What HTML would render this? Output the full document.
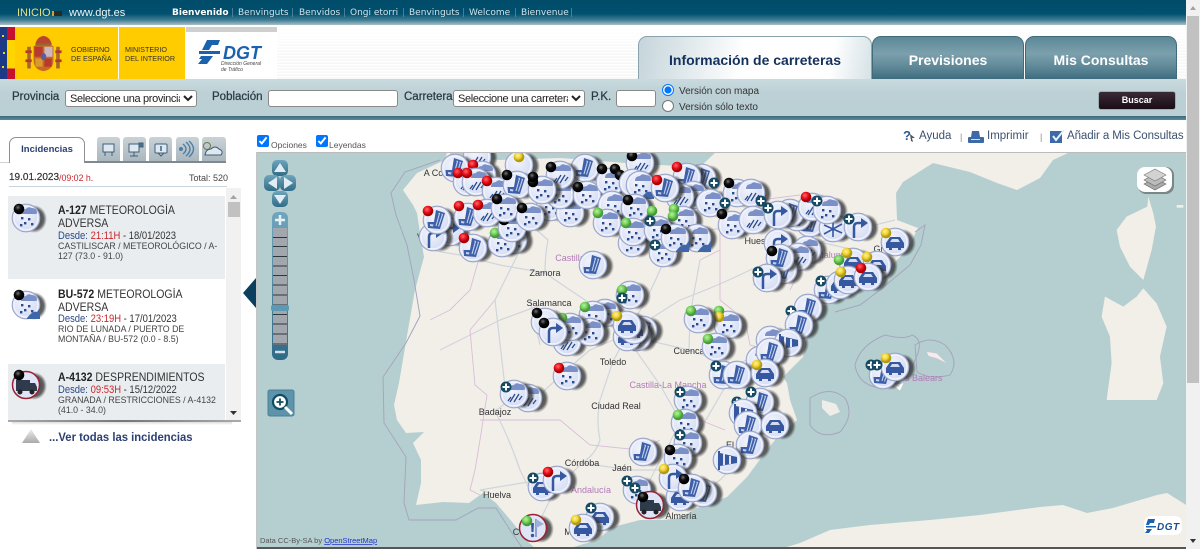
<!DOCTYPE html>
<html lang="es"><head><meta charset="utf-8"><title>DGT</title>
<style>
html,body{margin:0;padding:0;width:1200px;height:549px;overflow:hidden;background:#fff;font-family:"Liberation Sans",Arial,sans-serif}
.t{position:absolute;white-space:nowrap;line-height:14px}
.a{position:absolute}
select,input[type=text]{position:absolute;box-sizing:border-box;margin:0;font:12px "Liberation Sans",Arial,sans-serif;background:#fff;border:1px solid #8a8a8a;border-radius:3px;color:#222}
select{font-size:11px;letter-spacing:-.35px;padding:0}
input[type=text]{padding:0 2px}
input[type=radio],input[type=checkbox]{position:absolute;margin:0}
.lab{font-size:11.5px;color:#2b3a45;font-weight:normal;-webkit-text-stroke:.25px #2b3a45}
.tab{position:absolute;top:36px;height:43px;box-sizing:border-box;border-radius:9px 9px 0 0;background:linear-gradient(#5d8898,#7ba0ac 40%,#5b8595 75%,#3e6c7e);border:1px solid #3f6b7b;border-bottom:0;color:#fff;font:bold 14px/46px "Liberation Sans",sans-serif;text-align:center}
.it{position:absolute;left:97px;top:137px;width:23px;height:24px;background:linear-gradient(#c9d2d7,#aab7be);border-radius:3px 3px 0 0}
.ti{font-size:11.5px;color:#333;transform:scaleX(.915);transform-origin:0 0}.ti b{color:#222}
.de{font-size:10.8px;color:#333;transform:scaleX(.875);transform-origin:0 0}.de span{color:#2c4a86}.de i{font-style:normal;color:#c8262c}
.sm{font-size:8.8px;color:#444}
.lang{top:6px;font:bold 9px/14px "DejaVu Sans",sans-serif;color:#d2e2e8}
.lang2{position:absolute;top:6px;color:#5f8da0;font:9px/14px "DejaVu Sans",sans-serif}
</style></head><body>

<!-- top bar -->
<div class="a" style="left:0;top:0;width:1186px;height:25px;background:linear-gradient(#004c69 0,#01506f 55%,#3f7d93 80%,#a9c0c8 100%)"></div>
<div class="t" style="left:17px;top:6px;font-size:11px;color:#ecdf8c">INICIO</div>
<div class="a" style="left:52px;top:11px;width:8px;height:5px;background:#2a2a22;border-left:2px solid #c9a52e"></div>
<div class="t" style="left:69px;top:6px;font-size:11px;color:#f0f5f6">www.dgt.es</div>
<div class="t lang" style="left:172px;color:#fff">Bienvenido</div>
<div class="t lang" style="left:238px;font-weight:normal">Benvinguts</div>
<div class="t lang" style="left:299px;font-weight:normal">Benvidos</div>
<div class="t lang" style="left:350px;font-weight:normal">Ongi etorri</div>
<div class="t lang" style="left:409px;font-weight:normal">Benvinguts</div>
<div class="t lang" style="left:469px;font-weight:normal">Welcome</div>
<div class="t lang" style="left:521px;font-weight:normal">Bienvenue</div>
<div class="lang2" style="left:231px">|</div><div class="lang2" style="left:291px">|</div><div class="lang2" style="left:343px">|</div><div class="lang2" style="left:402px">|</div><div class="lang2" style="left:462px">|</div><div class="lang2" style="left:514px">|</div><div class="lang2" style="left:570px">|</div>

<!-- header band -->
<div class="a" style="left:277px;top:25px;width:909px;height:54px;background:repeating-linear-gradient(#fff 0,#fff 1px,#f4f4f4 2px,#fafafa 3px)"></div>
<div class="a" style="left:277px;top:25px;width:909px;height:30px;background:linear-gradient(#fff,rgba(255,255,255,.6),rgba(255,255,255,0))"></div>

<!-- logos -->
<div class="a" style="left:0;top:25px;width:277px;height:54px;background:#fff;overflow:hidden">
 <div class="a" style="left:0;top:2px;width:7px;height:52px;background:#1d3a86"></div>
 <div class="a" style="left:2px;top:10px;width:2px;height:2px;background:#f5d40f"></div>
 <div class="a" style="left:3px;top:27px;width:2px;height:2px;background:#f5d40f"></div>
 <div class="a" style="left:2px;top:41px;width:2px;height:2px;background:#f5d40f"></div>
 <div class="a" style="left:7px;top:2px;width:8px;height:52px;background:linear-gradient(#c8102e 25%,#ffd500 25%,#ffd500 80%,#c8102e 80%)"></div>
 <div class="a" style="left:15px;top:2px;width:103px;height:52px;background:#fc0"></div>
 <div class="a" style="left:119px;top:2px;width:66px;height:52px;background:#fc0"></div>
 <div class="a" style="left:186px;top:2px;width:91px;height:5px;background:#cfcfcf"></div>
 <svg class="a" style="left:25px;top:10px" width="37" height="38" viewBox="0 0 40 42">
  <rect x="2" y="13" width="4" height="24" fill="#a8682a"/><rect x="34" y="13" width="4" height="24" fill="#a8682a"/>
  <rect x="0" y="17" width="7" height="3" fill="#b43a2c"/><rect x="33" y="17" width="7" height="3" fill="#b43a2c"/>
  <rect x="0" y="27" width="7" height="3" fill="#b43a2c"/><rect x="33" y="27" width="7" height="3" fill="#b43a2c"/>
  <path d="M11 10Q13 2 20 1Q27 2 29 10Z" fill="#b8452f"/><rect x="11" y="9" width="18" height="3" fill="#8c6a2a"/>
  <path d="M9 12H31V28Q31 38 20 40Q9 38 9 28Z" fill="#c86a24"/>
  <rect x="10" y="13" width="9" height="11" fill="#b8392e"/><rect x="21" y="13" width="9" height="11" fill="#c9b8c0"/>
  <rect x="11" y="26" width="8" height="9" fill="#d89a2c"/><rect x="21" y="26" width="8" height="9" fill="#b8392e"/>
  <ellipse cx="20" cy="24" rx="3" ry="4" fill="#5a5fa0"/>
 </svg>
 <div class="t" style="left:71px;top:21px;font-size:7.2px;line-height:8.5px;color:#333">GOBIERNO<br>DE ESPAÑA</div>
 <div class="t" style="left:125px;top:21px;font-size:7.2px;line-height:8.5px;color:#333">MINISTERIO<br>DEL INTERIOR</div>
 <svg class="a" style="left:198px;top:13px" width="26" height="28" viewBox="0 0 26 28"><g fill="#1a62ad"><path d="M9 2H22L20 7H14L11 12H4Z"/><rect x="1" y="13" width="21" height="3"/><path d="M3 18H15L9 26H0L4 21H1Z"/></g></svg>
 <div class="t" style="left:223px;top:19px;font:italic bold 18px/18px 'Liberation Sans',sans-serif;color:#1a62ad">DGT</div>
 <div class="t" style="left:221px;top:37px;font:italic 5px/5.5px 'Liberation Sans',sans-serif;color:#444">Dirección General<br>de Tráfico</div>
</div>

<!-- tabs -->
<div class="tab" style="left:638px;width:234px;background:linear-gradient(100deg,#c5d5db,#e9eff1 28%,#fff 45%,#fff 82%,#d6e2e6 100%);border:1px solid #8aa3ad;border-bottom:0;color:#14305c">Información de carreteras</div>
<div class="tab" style="left:872px;width:152px">Previsiones</div>
<div class="tab" style="left:1025px;width:152px">Mis Consultas</div>

<!-- search bar -->
<div class="a" style="left:0;top:79px;width:1186px;height:37px;background:linear-gradient(#c9dbdf,#bcd0d5 40%,#bad0d5)"></div>
<div class="a" style="left:0;top:116px;width:1186px;height:4px;background:linear-gradient(#3b6b7e,#5b8a9a)"></div>
<div class="t lab" style="left:12px;top:90px">Provincia</div>
<select style="left:65px;top:90px;width:132px;height:17px"><option>Seleccione una provincia</option></select>
<div class="t lab" style="left:212px;top:90px">Población</div>
<input type="text" style="left:268px;top:90px;width:130px;height:17px">
<div class="t lab" style="left:404px;top:90px">Carretera</div>
<select style="left:453px;top:90px;width:132px;height:17px"><option>Seleccione una carretera</option></select>
<div class="t lab" style="left:591px;top:90px">P.K.</div>
<input type="text" style="left:616px;top:90px;width:40px;height:17px">
<input type="radio" name="v" checked style="left:662px;top:84px;width:12px;height:12px">
<input type="radio" name="v" style="left:662px;top:100px;width:12px;height:12px">
<div class="t" style="left:679px;top:85px;font-size:10px;color:#333">Versión con mapa</div>
<div class="t" style="left:679px;top:101px;font-size:10px;color:#333">Versión sólo texto</div>
<div class="a" style="left:1099px;top:92px;width:76px;height:17px;border-radius:2px;background:linear-gradient(#3a2a36,#1a0d16);box-shadow:0 0 1px #000;color:#fff;font:bold 9px/17px 'Liberation Sans',sans-serif;text-align:center">Buscar</div>

<!-- sub bar -->
<input type="checkbox" checked style="left:257px;top:135px;width:12px;height:12px">
<div class="t" style="left:271px;top:138px;font-size:8.5px;color:#555">Opciones</div>
<input type="checkbox" checked style="left:316px;top:135px;width:12px;height:12px">
<div class="t" style="left:329px;top:138px;font-size:8.5px;color:#555">Leyendas</div>
<div class="t" style="left:903px;top:129px;font:bold 13px/14px 'Liberation Sans',sans-serif;color:#2c5a90">?</div>
<svg class="a" style="left:910px;top:134px" width="6" height="8"><path d="M0 0L5 4L2 4L3 8L1 7Z" fill="#555"/></svg>
<div class="t" style="left:919px;top:129px;font-size:11.5px;color:#3d5170">Ayuda</div>
<div class="t" style="left:960px;top:130px;font-size:9px;color:#888">|</div>
<svg class="a" style="left:968px;top:130px" width="16" height="14"><path d="M4 1H11L12 7H3Z" fill="#3c6aa8"/><rect x="0" y="7" width="16" height="6" rx="1" fill="#3c6aa8"/><rect x="3" y="9" width="9" height="1" fill="#cfe0ef"/></svg>
<div class="t" style="left:987px;top:129px;font-size:11.5px;color:#3d5170">Imprimir</div>
<div class="t" style="left:1040px;top:130px;font-size:9px;color:#888">|</div>
<svg class="a" style="left:1050px;top:129px" width="15" height="15"><rect x="0" y="2" width="12" height="12" fill="#3c6aa8"/><path d="M3 7L6 11L14 1" fill="none" stroke="#e8f0f8" stroke-width="2"/></svg>
<div class="t" style="left:1067px;top:129px;font-size:11.5px;letter-spacing:-.08px;color:#3d5170">Añadir a Mis Consultas</div>

<!-- left panel tabs -->
<div class="a" style="left:9px;top:137px;width:76px;height:26px;box-sizing:border-box;border:1px solid #8d9094;border-bottom:0;border-radius:7px 7px 0 0;background:#fff;color:#2c3f70;font:bold 9.5px/24px 'Liberation Sans',sans-serif;text-align:center">Incidencias</div>
<div class="a" style="left:85px;top:161px;width:141px;height:2px;background:#7f8a90"></div>
<div class="a" style="left:0;top:162px;width:9px;height:1px;background:#cfd2d4"></div>
<div class="it"></div><div class="it" style="left:123px"></div><div class="it" style="left:149px"></div><div class="it" style="left:176px"></div><div class="it" style="left:202px;width:24px"></div>
<svg class="a" style="left:97px;top:137px" width="130" height="24" fill="none" stroke="#3f5f7a" stroke-width="1">
 <rect x="6" y="7" width="11" height="8" fill="#dfe8ee"/><path d="M8 15V19M15 15V19"/>
 <rect x="32" y="7" width="10" height="8" fill="#dfe8ee"/><path d="M37 15V19M33 19H41"/><rect x="42" y="6" width="4" height="4" fill="#4d7086"/>
 <rect x="58" y="7" width="12" height="9" rx="1" fill="#dfe8ee"/><path d="M64 9V14" stroke-width="1.5"/><path d="M61 16L64 19L67 16"/>
 <path d="M86 7Q92 12 86 17M89 5Q97 12 89 19M92 4Q101 12 92 20" stroke="#4a7ea8" stroke-width="1.4"/><circle cx="84" cy="12" r="2" fill="#4a7ea8" stroke="none"/>
 <circle cx="110" cy="9" r="3.5" stroke="#6a7d4a"/><path d="M108 18H124Q127 14 122 12Q118 8 114 12Q109 12 108 18Z" fill="#dfe8ee"/>
</svg>
<div class="t" style="left:9px;top:171px;font-size:10px;color:#333;-webkit-text-stroke:.2px #333">19.01.2023</div>
<div class="t" style="left:59px;top:171px;font-size:8.8px;color:#c8262c">/09:02 h.</div>
<div class="t" style="left:189px;top:171px;font-size:9px;color:#444">Total: 520</div>
<div class="a" style="left:9px;top:186px;width:218px;height:1px;background:#c7d3dd"></div>

<!-- list -->
<div class="a" style="left:8px;top:196px;width:217px;height:83px;background:#e9edf0"></div>
<div class="a" style="left:8px;top:364px;width:217px;height:56px;background:#e9edf0"></div>
<div class="a" style="left:226px;top:188px;width:15px;height:233px;background:#f1f1f1"></div>
<div class="a" style="left:228px;top:202px;width:12px;height:15px;background:#c1c1c1"></div>
<svg class="a" style="left:226px;top:188px" width="15" height="233"><path d="M7.5 7L11 11H4Z" fill="#a3a3a3"/><path d="M4 223H11L7.500 227Z" fill="#333"/></svg>
<div class="a" style="left:8px;top:420px;width:233px;height:2px;background:linear-gradient(90deg,#aaa,#777 50%,#aaa)"></div>
<div class="a" style="left:12px;top:422px;width:220px;height:3px;background:linear-gradient(#ddd,#fff)"></div>

<div class="t ti" style="left:58px;top:204px"><b>A-127</b> METEOROLOGÍA</div>
<div class="t ti" style="left:58px;top:217px">ADVERSA</div>
<div class="t de" style="left:58px;top:229px"><span>Desde:</span> <i>21:11H</i> - 18/01/2023</div>
<div class="t sm" style="left:58px;top:239px">CASTILISCAR / METEOROLÓGICO / A-</div>
<div class="t sm" style="left:58px;top:249px">127 (73.0 - 91.0)</div>

<div class="t ti" style="left:58px;top:288px"><b>BU-572</b> METEOROLOGÍA</div>
<div class="t ti" style="left:58px;top:301px">ADVERSA</div>
<div class="t de" style="left:58px;top:312px"><span>Desde:</span> <i>23:19H</i> - 17/01/2023</div>
<div class="t sm" style="left:58px;top:322px">RIO DE LUNADA / PUERTO DE</div>
<div class="t sm" style="left:58px;top:332px">MONTAÑA / BU-572 (0.0 - 8.5)</div>

<div class="t ti" style="left:58px;top:371px"><b>A-4132</b> DESPRENDIMIENTOS</div>
<div class="t de" style="left:58px;top:383px"><span>Desde:</span> <i>09:53H</i> - 15/12/2022</div>
<div class="t sm" style="left:58px;top:393px">GRANADA / RESTRICCIONES / A-4132</div>
<div class="t sm" style="left:58px;top:403px">(41.0 - 34.0)</div>

<svg class="a" style="left:22px;top:429px" width="18" height="15"><defs><linearGradient id="tg" x1="0" y1="0" x2="0" y2="1"><stop offset="0" stop-color="#eee"/><stop offset="1" stop-color="#aaa"/></linearGradient></defs><path d="M9 0L18 14H0Z" fill="url(#tg)"/></svg>
<div class="t" style="left:49px;top:430px;font-size:12px;font-weight:bold;color:#2c3f70;transform:scaleX(.94);transform-origin:0 0">...Ver todas las incidencias</div>
<svg class="a" style="left:243px;top:278px" width="14" height="30"><path d="M0 15L13 0V30Z" fill="#0c3f5e"/></svg>

<!-- scrollbar -->
<div class="a" style="left:1186px;top:0;width:14px;height:549px;background:#f1f1f1"></div>
<div class="a" style="left:1187px;top:16px;width:12px;height:367px;background:#c1c1c1"></div>
<svg class="a" style="left:1186px;top:0" width="14" height="549"><path d="M7 6L10 10H4Z" fill="#a3a3a3"/><path d="M4 539H10L7 543Z" fill="#333"/></svg>

<!-- map -->
<svg class="a" style="left:257px;top:152px;background:#b5cfd1" width="929" height="397" viewBox="257 152 929 397">
<defs>
<filter id="bl" x="-2%" y="-2%" width="104%" height="104%"><feGaussianBlur stdDeviation=".35"/></filter>
<radialGradient id="mg" cx=".4" cy=".35" r=".8"><stop offset="0" stop-color="#f2f4fc"/><stop offset="1" stop-color="#d2daf2"/></radialGradient>
<radialGradient id="sh"><stop offset="0" stop-color="#222" stop-opacity=".9"/><stop offset=".75" stop-color="#333" stop-opacity=".75"/><stop offset="1" stop-color="#444" stop-opacity="0"/></radialGradient>
<radialGradient id="rd" cx=".4" cy=".35"><stop offset="0" stop-color="#ff6a6a"/><stop offset=".6" stop-color="#e8101e"/><stop offset="1" stop-color="#a00"/></radialGradient>
<radialGradient id="bk" cx=".4" cy=".35"><stop offset="0" stop-color="#777"/><stop offset=".5" stop-color="#111"/><stop offset="1" stop-color="#000"/></radialGradient>
<radialGradient id="gn" cx=".4" cy=".35"><stop offset="0" stop-color="#bdf0a0"/><stop offset=".6" stop-color="#6fcf55"/><stop offset="1" stop-color="#4a9a3c"/></radialGradient>
<radialGradient id="yl" cx=".4" cy=".35"><stop offset="0" stop-color="#fff39a"/><stop offset=".6" stop-color="#f0d030"/><stop offset="1" stop-color="#b09a10"/></radialGradient>
<g id="b"><ellipse cx="8" cy="1" rx="13" ry="14" fill="url(#sh)"/><circle r="13.800" fill="#e2e7f8" stroke="#9aa5c6" stroke-width="1.100"/><circle r="11.800" fill="url(#mg)" stroke="#f6f8ff" stroke-width=".8"/></g>
<g id="R"><circle r="5.300" fill="url(#rd)"/></g>
<g id="K"><circle r="5.300" fill="url(#bk)"/></g>
<g id="G"><circle r="5.300" fill="url(#gn)"/></g>
<g id="Y"><circle r="5.300" fill="url(#yl)"/></g>
<g id="P"><circle r="5.500" fill="#174a63"/><path d="M-3.500 0H3.500M0-3.500V3.500" stroke="#fff" stroke-width="2"/></g>
<path id="cl" d="M-5-4Q-5-9 0-9Q2-12 6-10Q11-10 11-5Q11-4 10-4Z" fill="#7b90c8"/>
<g id="w"><use href="#b"/><use href="#cl"/><g fill="#2b4c91"><rect x="-5" y="-1" width="2.400" height="2.400"/><rect x="2" y="0" width="2.400" height="2.400"/><rect x="-2" y="4" width="2.400" height="2.400"/><rect x="5" y="5" width="2.400" height="2.400"/><rect x="-6" y="6" width="2.400" height="2.400"/></g></g>
<g id="r"><use href="#b"/><use href="#cl"/><path d="M-3 3L-6 7M1 0L-4 8M5 0L0 8M8 2L5 6" stroke="#2b4c91" stroke-width="1.300" fill="none"/></g>
<g id="n"><use href="#w"/><path d="M1 13Q7 5 11 7L14 3V14H1Z" fill="#3f66a8"/></g>
<g id="c"><use href="#b"/><path d="M-1-10L8-7L3 9L-9 8L-9.500 2L-3 2Z" fill="#3c5fa8"/><path d="M1.500-7L2.500-6.600L-1 6M4.500-6L5.500-5.600L1.500 6.500" stroke="#c4d0ee" stroke-width="1.100" fill="none"/><path d="M-7 4L-3.500 4.500L-4 6.500L-7 6Z" fill="#c4d0ee"/></g>
<g id="a"><use href="#b"/><path d="M-4 11V0Q-4-4 0-4H5" fill="none" stroke="#3458a0" stroke-width="2.500"/><path d="M3-9L10-4L3 1Z" fill="#3458a0"/></g>
<g id="k"><use href="#b"/><path d="M-9 6V1L-5-5H5L9 1V6H6V8H3V6H-3V8H-6V6Z" fill="#3458a0"/><path d="M-5 0L-3-3H3L5 0Z" fill="#d2dbf3"/></g>
<g id="s"><use href="#b"/><path d="M-8-9V10" stroke="#3458a0" stroke-width="2"/><path d="M-7-7L10-3V3L-7 6Z" fill="#3458a0"/><path d="M-3-6V5M3-4V4" stroke="#dfe5f7" stroke-width="2"/></g>
<g id="z"><use href="#b"/><path d="M-9-3L9 5M9-4L-9 6M0-7V9" stroke="#3458a0" stroke-width="1.600"/></g>
<g id="t"><ellipse cx="8" cy="1" rx="13" ry="14" fill="url(#sh)"/><circle r="13.500" fill="#dfe5f7" stroke="#9a2030" stroke-width="1.500"/><path d="M-10-5H4V6H-10ZM4-2H9L11 2V6H4Z" fill="#2f3a4c"/><circle cx="-6" cy="7" r="2.500" fill="#222"/><circle cx="6" cy="7" r="2.500" fill="#222"/></g>
<g id="x"><ellipse cx="8" cy="1" rx="13" ry="14" fill="url(#sh)"/><circle r="13.500" fill="#dfe5f7" stroke="#9a2030" stroke-width="1.500"/><path d="M3-9V9" stroke="#8ea0cc" stroke-width="2"/><path d="M3-9L11-4L3 0Z" fill="#9fb0d8"/><path d="M-2-5H1L.5 4H-1.500Z" fill="#3458a0"/><circle cx="-.5" cy="7.500" r="1.700" fill="#3458a0"/></g>
</defs>

<!-- land -->
<g filter="url(#bl)">
<path d="M447 152L445 160L417 173L403 190L413 205L417 213L420 233L424 257L415 290L408 330L399 383L394 405L397 420L406 433L424 432L413 443L421 460L421 483L416 505L443 502L469 503L483 493L496 503L513 523L526 540L536 549L567 549L597 540L613 527L640 520L663 520L680 518L697 508L727 497L747 477L767 450L775 440L797 420L790 400L787 383L783 377L803 357L807 337L820 307L857 293L890 267L907 250L918 228L897 220L896 193L903 182L933 163L970 172L997 183L1017 190L1040 178L1053 160L1070 152Z" fill="#f2efe9"/>
<path d="M450 152H716L700 167L640 164L560 158L500 160L450 156Z" fill="#b5cfd1"/>
<path d="M780 549L800 543L830 530L870 525L930 520L980 515L1040 507L1063 505L1087 513L1113 508L1157 495L1167 493L1183 503L1186 505V549Z" fill="#f2efe9"/>
<g transform="translate(740 150) scale(.3333)" fill="#f2efe9">
<path d="M1225 140L1240 190L1248 230L1235 300L1210 390L1170 350L1140 290L1130 240L1160 200L1222 170Z"/>
<path d="M1210 415L1250 460L1280 530L1260 620L1270 700L1250 750L1100 750L1115 640L1110 560L1085 500L1095 440L1150 470L1190 440Z"/>
<path d="M560 605L590 610L620 640L590 625L565 618Z" fill="#f6ecec" stroke="#d9b8cf"/>
<path d="M460 705L490 700L480 722Z" fill="#fff"/>
<path d="M1310 165h20v8h-20z"/>
</g>
<path d="M822 400L836 404L840 412L830 416L822 408Z" fill="#f2efe9" opacity=".95"/>

<!-- sea boundaries -->
<g fill="none" stroke="#a5a6bb" stroke-width="1">
<path d="M440 160L405 172L391 193L396 215L407 245L414 280L420 316L406 343L383 377L384 423L406 457L404 503L409 520L456 520L478 508L496 508L510 530L523 549"/>
<path d="M915 232L925 225L921 245L910 265L880 290L860 305L835 312"/>
<path d="M885 335Q905 340 912 335Q925 340 915 360Q905 385 880 388Q858 385 855 365Q860 345 885 335Z"/>
<path d="M915 345Q930 335 945 345Q960 360 950 375Q930 380 917 372Z"/>
<path d="M810 398Q830 385 845 398Q855 415 840 432Q820 440 810 425Z"/>
</g>
<!-- roads -->
<g fill="none" stroke="#d0d5db" stroke-width="1.200">
<path d="M625 335Q620 350 613 361L600 400Q596 420 600 440Q595 455 582 463L555 490L540 520"/>
<path d="M625 335L590 350Q560 375 540 395L510 400L495 411Q510 440 520 470L530 490"/>
<path d="M625 335L600 310Q585 300 570 290L545 273Q545 255 548 240L520 215"/>
<path d="M625 335Q645 305 660 270L680 225L700 200"/>
<path d="M625 335L689 350Q715 360 735 365L770 350"/>
<path d="M625 335L680 300Q720 285 750 270L800 250L855 230L895 220"/>
<path d="M625 335L660 385L680 420Q670 445 655 470L640 500"/>
<path d="M549 302L500 320L460 340L440 350M545 273L500 265L460 255L430 250"/>
<path d="M689 350L690 315L700 260M735 370L700 430L670 470L630 470L582 463M760 440L720 480L680 510"/>
<path d="M520 215L520 250L495 300L505 387M540 345L530 300"/>
<path d="M540 480L480 490L497 495M710 230L770 220M810 240L855 250"/>
</g>
<g fill="none" stroke="#d8bfd8" stroke-width=".9">
<path d="M480 255L470 290L450 310L430 320M495 300L470 330L475 385L487 395L480 440L475 470L470 490L480 495"/>
<path d="M480 420L520 420L560 420L590 445L640 450L660 440M700 260L720 250L720 230L760 200L800 195M720 250L720 300L745 320L750 345L770 350"/>
<path d="M790 290L800 270L810 265M690 400L700 420L725 430"/>
</g>
</g>
<!-- labels -->
<g font-family="Liberation Sans,sans-serif" font-size="9" fill="#333" text-anchor="middle">
<text x="435" y="176">A Cor</text><text x="545" y="276">Zamora</text><text x="549" y="306">Salamanca</text><text x="613" y="365">Toledo</text><text x="689" y="354">Cuenca</text><text x="616" y="409">Ciudad Real</text><text x="495" y="415">Badajoz</text><text x="582" y="466">Córdoba</text><text x="622" y="471">Jaén</text><text x="497" y="498">Huelva</text><text x="681" y="519">Almería</text><text x="755" y="244">Hues</text><text x="878" y="252">Gi</text><text x="730" y="448">El</text><text x="545" y="490">S</text><text x="568" y="535">M</text><text x="516" y="535">C</text><text x="420" y="240">V</text>
<g fill="#b27ab8"><text x="668" y="388">Castilla-La Mancha</text><text x="591" y="493">Andalucía</text><text x="570" y="261">Castilla</text><text x="768" y="285">Aragón</text><text x="830" y="258">Catalunya</text><text x="918" y="381">Illes Balears</text></g>
</g>

<!-- markers -->
<g filter="url(#bl)">
<use href="#r" x="477" y="157"/><use href="#c" x="455" y="168"/><use href="#b" x="519" y="165"/><use href="#Y" x="519" y="157"/>
<use href="#r" x="482" y="175"/><use href="#R" x="473" y="165"/><use href="#r" x="467" y="182"/><use href="#R" x="458" y="173"/><use href="#r" x="476" y="182"/><use href="#R" x="467" y="173"/>
<use href="#r" x="496" y="191"/><use href="#R" x="487" y="181"/>
<use href="#w" x="550" y="207"/><use href="#w" x="570" y="213"/><use href="#w" x="560" y="195"/>
<use href="#c" x="585" y="168"/><use href="#r" x="560" y="175"/><use href="#K" x="551" y="167"/><use href="#c" x="517" y="185"/><use href="#K" x="507" y="175"/>
<use href="#w" x="542" y="190"/><use href="#K" x="533" y="182"/><use href="#K" x="533" y="177"/><use href="#w" x="587" y="195"/><use href="#K" x="578" y="187"/>
<use href="#r" x="640" y="163"/><use href="#K" x="632" y="156"/><use href="#w" x="610" y="182"/><use href="#K" x="602" y="169"/><use href="#K" x="615" y="169"/><use href="#K" x="620" y="175"/><use href="#w" x="633" y="183"/><use href="#n" x="640" y="185"/>
<use href="#w" x="612" y="205"/><use href="#w" x="635" y="208"/><use href="#K" x="628" y="200"/>
<use href="#w" x="607" y="223"/><use href="#G" x="598" y="213"/><use href="#w" x="632" y="243"/><use href="#w" x="633" y="232"/><use href="#G" x="626" y="223"/>
<use href="#a" x="450" y="232"/><use href="#a" x="433" y="237"/><use href="#c" x="437" y="220"/><use href="#R" x="428" y="211"/>
<use href="#c" x="468" y="217"/><use href="#R" x="459" y="206"/><use href="#r" x="487" y="213"/><use href="#R" x="478" y="205"/>
<use href="#w" x="513" y="240"/><use href="#c" x="473" y="248"/><use href="#R" x="464" y="238"/><use href="#w" x="502" y="243"/><use href="#G" x="495" y="233"/>
<use href="#w" x="512" y="228"/><use href="#K" x="504" y="220"/><use href="#w" x="505" y="208"/><use href="#K" x="497" y="199"/><use href="#w" x="530" y="217"/><use href="#K" x="522" y="208"/>
<use href="#c" x="702" y="178"/><use href="#c" x="687" y="177"/><use href="#R" x="677" y="167"/><use href="#r" x="693" y="195"/><use href="#r" x="680" y="197"/><use href="#c" x="665" y="188"/><use href="#R" x="657" y="180"/>
<use href="#w" x="683" y="220"/><use href="#G" x="674" y="209"/><use href="#G" x="673" y="216"/><use href="#w" x="658" y="230"/><use href="#G" x="652" y="211"/><use href="#P" x="650" y="221"/>
<use href="#w" x="663" y="253"/><use href="#P" x="655" y="245"/><use href="#n" x="697" y="238"/><use href="#n" x="675" y="238"/><use href="#K" x="666" y="229"/>
<use href="#c" x="593" y="265"/>
<use href="#w" x="710" y="203"/><use href="#w" x="737" y="193"/><use href="#P" x="714" y="183"/><use href="#K" x="729" y="183"/><use href="#w" x="732" y="225"/><use href="#K" x="722" y="214"/><use href="#P" x="725" y="203"/>
<use href="#r" x="751" y="193"/><use href="#r" x="753" y="220"/><use href="#c" x="810" y="223"/><use href="#c" x="797" y="217"/><use href="#c" x="790" y="213"/><use href="#a" x="778" y="215"/><use href="#P" x="761" y="201"/><use href="#P" x="768" y="208"/>
<use href="#z" x="833" y="228"/><use href="#r" x="812" y="207"/><use href="#R" x="806" y="197"/><use href="#w" x="827" y="210"/><use href="#P" x="817" y="201"/><use href="#a" x="858" y="227"/><use href="#P" x="849" y="219"/>
<use href="#k" x="895" y="242"/><use href="#Y" x="886" y="233"/>
<use href="#a" x="778" y="243"/><use href="#r" x="807" y="250"/><use href="#r" x="798" y="257"/><use href="#c" x="783" y="270"/><use href="#c" x="780" y="258"/><use href="#K" x="772" y="251"/><use href="#a" x="767" y="278"/><use href="#P" x="758" y="272"/>
<use href="#k" x="853" y="262"/><use href="#Y" x="847" y="253"/><use href="#G" x="839" y="260"/><use href="#k" x="877" y="265"/><use href="#Y" x="867" y="257"/><use href="#c" x="828" y="290"/><use href="#P" x="821" y="281"/><use href="#k" x="840" y="285"/><use href="#k" x="848" y="280"/><use href="#Y" x="841" y="272"/><use href="#k" x="868" y="277"/><use href="#R" x="861" y="268"/>
<use href="#c" x="808" y="308"/><use href="#P" x="791" y="311"/><use href="#c" x="799" y="325"/>
<use href="#w" x="630" y="295"/><use href="#G" x="622" y="290"/><use href="#P" x="622" y="298"/><use href="#w" x="605" y="313"/><use href="#w" x="593" y="315"/><use href="#G" x="585" y="307"/>
<use href="#r" x="567" y="342"/><use href="#w" x="590" y="332"/><use href="#w" x="570" y="327"/><use href="#G" x="562" y="318"/><use href="#b" x="545" y="322"/><use href="#K" x="537" y="313"/><use href="#a" x="553" y="332"/><use href="#K" x="544" y="323"/>
<use href="#c" x="643" y="330"/><use href="#c" x="637" y="337"/><use href="#k" x="627" y="337"/><use href="#k" x="634" y="330"/><use href="#k" x="627" y="325"/><use href="#Y" x="617" y="316"/>
<use href="#w" x="728" y="325"/><use href="#G" x="719" y="311"/><use href="#Y" x="719" y="317"/><use href="#w" x="698" y="319"/><use href="#G" x="691" y="311"/><use href="#w" x="716" y="347"/><use href="#G" x="708" y="339"/>
<use href="#w" x="567" y="376"/><use href="#R" x="559" y="368"/><use href="#r" x="528" y="398"/><use href="#r" x="514" y="394"/><use href="#P" x="506" y="387"/>
<use href="#w" x="688" y="400"/><use href="#P" x="680" y="392"/><use href="#w" x="685" y="423"/><use href="#G" x="678" y="415"/><use href="#w" x="688" y="443"/><use href="#P" x="680" y="435"/>
<use href="#r" x="770" y="340"/><use href="#s" x="788" y="343"/><use href="#r" x="760" y="360"/><use href="#c" x="770" y="352"/><use href="#c" x="723" y="375"/><use href="#P" x="716" y="366"/><use href="#c" x="737" y="375"/><use href="#k" x="765" y="373"/><use href="#Y" x="757" y="365"/>
<use href="#c" x="765" y="420"/><use href="#c" x="760" y="402"/><use href="#P" x="751" y="392"/><use href="#P" x="737" y="402"/><use href="#s" x="743" y="413"/><use href="#c" x="748" y="425"/><use href="#k" x="775" y="425"/><use href="#c" x="750" y="445"/>
<use href="#c" x="643" y="452"/><use href="#w" x="678" y="458"/><use href="#K" x="670" y="450"/><use href="#s" x="727" y="460"/>
<use href="#k" x="542" y="487"/><use href="#P" x="533" y="478"/><use href="#a" x="557" y="480"/><use href="#R" x="548" y="472"/>
<use href="#w" x="637" y="490"/><use href="#P" x="627" y="481"/><use href="#P" x="635" y="488"/><use href="#t" x="650" y="505"/><use href="#K" x="643" y="497"/>
<use href="#k" x="680" y="497"/><use href="#a" x="673" y="478"/><use href="#Y" x="664" y="469"/><use href="#c" x="703" y="493"/><use href="#c" x="692" y="488"/><use href="#K" x="684" y="479"/>
<use href="#k" x="600" y="517"/><use href="#P" x="591" y="508"/><use href="#k" x="583" y="528"/><use href="#Y" x="576" y="520"/>
<use href="#x" x="533" y="528"/><use href="#G" x="527" y="521"/>
<use href="#c" x="883" y="375"/><use href="#P" x="871" y="365"/><use href="#k" x="895" y="367"/><use href="#P" x="877" y="365"/><use href="#Y" x="886" y="358"/>
</g>

<!-- borders -->
<rect x="257" y="547" width="929" height="2" fill="#555"/>
<rect x="257" y="152" width="929" height="1" fill="#bbb"/>

<!-- nav controls -->
<defs><linearGradient id="bt" x1="0" y1="0" x2="0" y2="1"><stop offset="0" stop-color="#6fa5bd"/><stop offset="1" stop-color="#2f6b87"/></linearGradient></defs>
<rect x="272" y="160" width="16" height="16" rx="5" fill="url(#bt)"/><path d="M280 163L286 172H274Z" fill="#e2edf2"/>
<rect x="272" y="191" width="16" height="16" rx="5" fill="url(#bt)"/><path d="M280 204L286 195H274Z" fill="#e2edf2"/>
<rect x="264" y="175" width="16" height="16" rx="5" fill="url(#bt)"/><path d="M268 183L277 177V189Z" fill="#e2edf2"/>
<rect x="280" y="175" width="16" height="16" rx="5" fill="url(#bt)"/><path d="M293 183L284 177V189Z" fill="#e2edf2"/>
<rect x="272" y="212" width="16" height="148" rx="6" fill="url(#bt)"/>
<rect x="273" y="228" width="14" height="117" fill="#a2a6ad"/>
<path d="M273 237.500H287M273 246.500H287M273 256.500H287M273 266H287M273 275.500H287M273 285H287M273 295H287M273 305H287M273 314.500H287M273 324H287M273 334H287M273 344H287" stroke="#2c3a40" stroke-width="1"/>
<path d="M275 220H285M280 215V225" stroke="#e6f0f4" stroke-width="2.500"/>
<path d="M275 352H285" stroke="#cfe0e8" stroke-width="2.500"/>
<rect x="271" y="305" width="18" height="6" rx="2" fill="#5a9ab5"/>
<rect x="268" y="390" width="26" height="26" rx="2" fill="#5d93ab" stroke="#4a7f96"/>
<circle cx="280" cy="402" r="7" fill="#fff" stroke="#0e4e63" stroke-width="2.200"/><path d="M276.500 402H283.500M280 398.500V405.500" stroke="#0e4e63" stroke-width="1.800"/><path d="M285 407L292 414" stroke="#fff" stroke-width="3"/>

<!-- layers -->
<rect x="1138" y="167" width="36" height="27" rx="8" fill="#555" opacity=".6"/>
<rect x="1137" y="167" width="35" height="25" rx="8" fill="#fff"/>
<path d="M1144 184L1155 178L1166 184L1155 190Z" fill="#aaa" stroke="#666" stroke-width=".6"/>
<path d="M1144 180L1155 174L1166 180L1155 186Z" fill="#bbb" stroke="#666" stroke-width=".6"/>
<path d="M1144 175L1155 169L1166 175L1155 181Z" fill="#d2d2d2" stroke="#777" stroke-width=".6"/>

<!-- dgt mini -->
<rect x="1144" y="516" width="38" height="19" rx="7" fill="#fff"/>
<path d="M1148 519H1155L1154 523H1150L1149 525H1146ZM1146 526H1156V527.500H1146ZM1146 529H1152L1149 533H1145L1147 530.500Z" fill="#1a62ad"/>
<text x="1157" y="530" font-family="Liberation Sans,sans-serif" font-weight="bold" font-style="italic" font-size="10" fill="#1a4f90" letter-spacing=".5">DGT</text>

<text x="260" y="543" font-family="Liberation Sans,sans-serif" font-size="7.500" fill="#555">Data CC-By-SA by <tspan fill="#2233cc" text-decoration="underline">OpenStreetMap</tspan></text>
</svg>

<!-- map left border -->
<div class="a" style="left:256px;top:152px;width:1px;height:397px;background:#c4c4c4"></div>

<!-- list icons -->
<svg class="a" style="left:8px;top:196px" width="40" height="210" viewBox="8 196 40 210">
<use href="#w" x="26" y="218"/><use href="#K" x="19" y="209"/>
<use href="#n" x="26" y="305"/><use href="#K" x="19" y="295"/>
<use href="#t" x="26" y="385"/><use href="#K" x="19" y="375"/>
</svg>
</body></html>
